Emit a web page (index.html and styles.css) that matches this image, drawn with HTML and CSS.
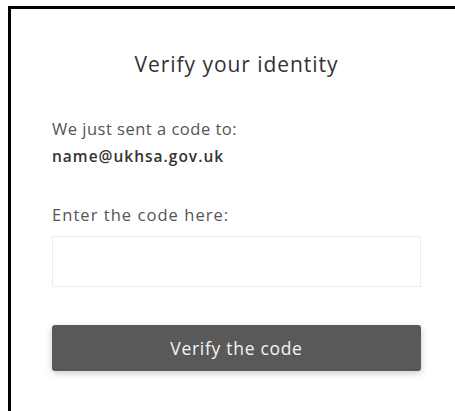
FILE: index.html
```html
<!DOCTYPE html>
<html lang="en">
<head>
<meta charset="utf-8">
<title>Verify your identity</title>
<link rel="stylesheet" href="styles.css">
</head>
<body>
  <main class="card">
    <h1 class="title">Verify your identity</h1>
    <p class="sent">We just sent a code to:</p>
    <p class="email">name@ukhsa.gov.uk</p>
    <label class="label" for="code">Enter the code here:</label>
    <input class="code-input" id="code" type="text" autocomplete="one-time-code">
    <button class="verify-btn" type="button">Verify the code</button>
  </main>
</body>
</html>
```
FILE: styles.css
```css
html, body {
  margin: 0;
  padding: 0;
  background: #fff;
  overflow: hidden;
}

body {
  font-family: "Open Sans", "Noto Sans", sans-serif;
  color: #555;
}

.card {
  margin: 6px 0 0 8px;
  width: 369px;
  padding: 43px 41px 60px;
  border: 3px solid #000;
  border-bottom: none;
  display: flex;
  flex-direction: column;
}

.title {
  margin: 0;
  font-size: 21px;
  line-height: 24px;
  font-weight: 400;
  letter-spacing: 0.95px;
  color: #333;
  text-align: center;
}

.sent {
  margin: 43px 0 0;
  font-size: 16.5px;
  line-height: 20px;
  letter-spacing: 0.5px;
  color: #555;
}

.email {
  margin: 7px 0 0;
  font-size: 15.5px;
  line-height: 20px;
  font-weight: 600;
  letter-spacing: 1px;
  color: #333;
}

.label {
  margin-top: 39px;
  font-size: 16.5px;
  line-height: 20px;
  letter-spacing: 1.05px;
  color: #555;
}

.code-input {
  margin: 11px 0 0;
  box-sizing: border-box;
  width: 100%;
  height: 51px;
  border: 1px solid #ececec;
  border-radius: 1px;
  background: #fff;
  font: inherit;
  padding: 0 12px;
  outline: none;
}

.verify-btn {
  margin-top: 38px;
  height: 46px;
  width: 100%;
  border: none;
  border-radius: 3px;
  background: #595959;
  color: #f4f4f4;
  font-family: inherit;
  font-size: 17.5px;
  letter-spacing: 0.7px;
  box-shadow: 0 2px 7px rgba(0, 0, 0, 0.22);
  cursor: pointer;
}
```
